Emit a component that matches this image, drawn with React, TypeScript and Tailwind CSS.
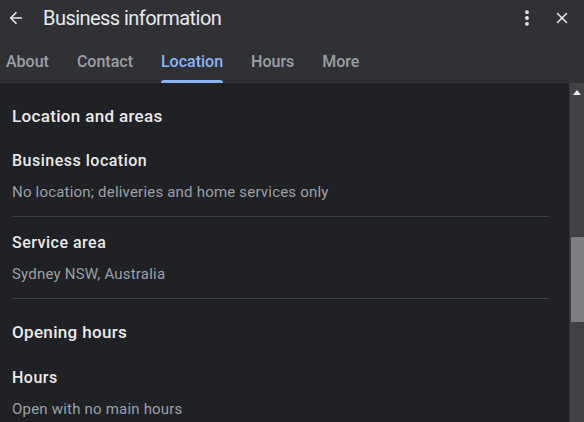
import React from 'react';
import { ArrowLeft, EllipsisVertical, X } from 'lucide-react';

const TABS = ['About', 'Contact', 'Location', 'Hours', 'More'];
const ACTIVE_TAB = 'Location';

interface InfoRowProps {
  title: string;
  value: string;
}

const InfoRow: React.FC<InfoRowProps> = ({ title, value }) => (
  <div>
    <p className="text-[16px] leading-[24px] font-medium tracking-[0.5px] text-[#e8eaed]">{title}</p>
    <p className="mt-[9px] text-[15px] leading-[20px] tracking-[0.2px] text-[#9aa0a6]">{value}</p>
  </div>
);

const App: React.FC = () => {
  return (
    <div
      className="w-[584px] h-[422px] overflow-hidden flex flex-col bg-[#202124]"
      style={{ fontFamily: 'Roboto, "Noto Sans", sans-serif' }}
    >
      {/* Header */}
      <div className="h-[83px] shrink-0 bg-[#303134] flex flex-col">
        <div className="h-[35px] flex items-center">
          <button type="button" className="ml-[6px] w-[20px] h-[20px] flex items-center justify-center text-[#e8eaed]" aria-label="Back">
            <ArrowLeft size={18} strokeWidth={2.2} />
          </button>
          <h1 className="ml-[17px] text-[20px] leading-[28px] text-[#e8eaed] tracking-[-0.55px]">Business information</h1>
          <div className="ml-auto flex items-center">
            <button type="button" className="w-[20px] h-[20px] flex items-center justify-center text-[#e8eaed]" aria-label="More options">
              <EllipsisVertical size={20} strokeWidth={2.6} />
            </button>
            <button type="button" className="ml-[15px] mr-[12px] w-[20px] h-[20px] flex items-center justify-center text-[#e8eaed]" aria-label="Close">
              <X size={18} strokeWidth={2} />
            </button>
          </div>
        </div>
        <div className="flex-1 flex pl-[6px] gap-[28px]">
          {TABS.map((tab) => {
            const isActive = tab === ACTIVE_TAB;
            return (
              <div key={tab} className="flex flex-col">
                <span
                  className={`mt-[17px] text-[16px] leading-[20px] font-medium ${
                    isActive ? 'text-[#8ab4f8]' : 'text-[#9aa0a6]'
                  }`}
                >
                  {tab}
                </span>
                <div className={`mt-auto h-[3px] rounded-t-[3px] ${isActive ? 'bg-[#8ab4f8]' : 'bg-transparent'}`} />
              </div>
            );
          })}
        </div>
      </div>

      {/* Body */}
      <div className="flex-1 min-h-0 flex">
        <div className="flex-1 pl-[12px] pr-[20px] pt-[21px]">
          <h2 className="text-[17px] leading-[24px] font-medium tracking-[0.33px] text-[#e8eaed]">Location and areas</h2>
          <div className="mt-[21px]">
            <InfoRow title="Business location" value="No location; deliveries and home services only" />
          </div>
          <div className="mt-[14px] h-px bg-[#3c4043]" />
          <div className="mt-[14px]">
            <InfoRow title="Service area" value="Sydney NSW, Australia" />
          </div>
          <div className="mt-[14px] h-px bg-[#3c4043]" />
          <h2 className="mt-[21px] text-[17px] leading-[24px] font-medium tracking-[0.33px] text-[#e8eaed]">Opening hours</h2>
          <div className="mt-[22px]">
            <InfoRow title="Hours" value="Open with no main hours" />
          </div>
        </div>

        {/* Scrollbar */}
        <div className="w-[15px] shrink-0 bg-[#424242] border-l border-[#383838] flex flex-col items-center">
          <svg width="8" height="5" viewBox="0 0 8 5" className="mt-[7px]">
            <polygon points="4,0 8,5 0,5" fill="#e8eaed" />
          </svg>
          <div className="mt-[142px] w-[13px] h-[85px] bg-[#7e7e7e]" />
        </div>
      </div>
    </div>
  );
};

export default App;
